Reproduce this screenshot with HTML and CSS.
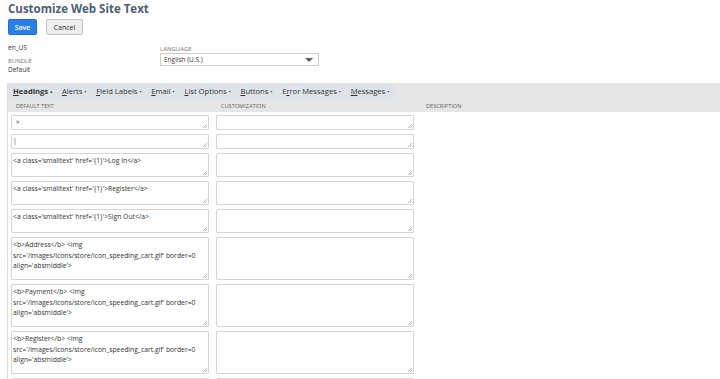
FILE: index.html
```html
<!DOCTYPE html>
<html lang="en">
<head>
  <meta charset="UTF-8" />
  <title>Customize Web Site Text</title>
  <link rel="stylesheet" href="styles.css">
</head>
<body>
<h1 class="page-title">Customize Web Site Text</h1>

<div class="actions">
  <button class="btn btn-save">Save</button>
  <button class="btn btn-cancel">Cancel</button>
</div>

<div class="meta">
  <div class="meta-left">
    <div class="locale">en_US</div>
    <div class="field-label">BUNDLE</div>
    <div class="field-value">Default</div>
  </div>
  <div class="meta-right">
    <div class="field-label">LANGUAGE</div>
    <div class="select">
      <span>English (U.S.)</span>
      <span class="caret"></span>
    </div>
  </div>
</div>

<div class="panel">
  <div class="tab-bar">
    <ul class="tabs">
      <li class="tab active"><u>H</u>eadings <i>•</i></li>
      <li class="tab"><u>A</u>lerts <i>•</i></li>
      <li class="tab"><u>F</u>ield Labels <i>•</i></li>
      <li class="tab"><u>E</u>mail <i>•</i></li>
      <li class="tab"><u>L</u>ist Options <i>•</i></li>
      <li class="tab"><u>B</u>uttons <i>•</i></li>
      <li class="tab">E<u>r</u>ror Messages <i>•</i></li>
      <li class="tab"><u>M</u>essages <i>•</i></li>
    </ul>
  </div>

  <table class="text-table">
    <thead>
      <tr>
        <th class="col-default">DEFAULT TEXT</th>
        <th class="col-custom">CUSTOMIZATION</th>
        <th>DESCRIPTION</th>
      </tr>
    </thead>
    <tbody>
      <tr>
        <td><textarea class="h1 indent">»</textarea></td>
        <td><textarea class="h1"></textarea></td>
        <td></td>
      </tr>
      <tr>
        <td><textarea class="h1">|</textarea></td>
        <td><textarea class="h1"></textarea></td>
        <td></td>
      </tr>
      <tr>
        <td><textarea class="h2">&lt;a class='smalltext' href='{1}'&gt;Log In&lt;/a&gt;</textarea></td>
        <td><textarea class="h2"></textarea></td>
        <td></td>
      </tr>
      <tr>
        <td><textarea class="h2">&lt;a class='smalltext' href='{1}'&gt;Register&lt;/a&gt;</textarea></td>
        <td><textarea class="h2"></textarea></td>
        <td></td>
      </tr>
      <tr>
        <td><textarea class="h2">&lt;a class='smalltext' href='{1}'&gt;Sign Out&lt;/a&gt;</textarea></td>
        <td><textarea class="h2"></textarea></td>
        <td></td>
      </tr>
      <tr>
        <td><textarea class="h3">&lt;b&gt;Address&lt;/b&gt; &lt;img src='/images/icons/store/icon_speeding_cart.gif' border=0 align='absmiddle'&gt;</textarea></td>
        <td><textarea class="h3"></textarea></td>
        <td></td>
      </tr>
      <tr>
        <td><textarea class="h3">&lt;b&gt;Payment&lt;/b&gt; &lt;img src='/images/icons/store/icon_speeding_cart.gif' border=0 align='absmiddle'&gt;</textarea></td>
        <td><textarea class="h3"></textarea></td>
        <td></td>
      </tr>
      <tr>
        <td><textarea class="h3">&lt;b&gt;Register&lt;/b&gt; &lt;img src='/images/icons/store/icon_speeding_cart.gif' border=0 align='absmiddle'&gt;</textarea></td>
        <td><textarea class="h3"></textarea></td>
        <td></td>
      </tr>
      <tr>
        <td><textarea class="h3">&lt;b&gt;Shipping&lt;/b&gt;</textarea></td>
        <td><textarea class="h3"></textarea></td>
        <td></td>
      </tr>
    </tbody>
  </table>
</div>
</body>
</html>
```

FILE: styles.css
```css
* {
  box-sizing: border-box;
}

body {
  margin: 0;
  padding: 0 0 0 8px;
  font-family: "Open Sans", "Liberation Sans", sans-serif;
  color: #333333;
  background: #ffffff;
  overflow: hidden;
}

.page-title {
  margin: 0;
  padding-top: 1px;
  font-size: 11.5px;
  line-height: 16px;
  font-weight: 700;
  color: #4d5e76;
}

.actions {
  display: flex;
  gap: 9px;
  margin-top: 2px;
}

.btn {
  height: 16px;
  padding: 0 5px;
  font-family: inherit;
  font-size: 7px;
  border-radius: 2px;
  cursor: pointer;
}

.btn-save {
  width: 29px;
  background: #2d7fe8;
  border: 1px solid #1f6ed6;
  color: #ffffff;
  font-weight: 600;
}

.btn-cancel {
  width: 37px;
  background: #eeeeee;
  border: 1px solid #c4c4c4;
  color: #333333;
}

.meta {
  display: flex;
  margin-top: 7px;
}

.meta-left {
  width: 152px;
}

.locale {
  font-size: 6.5px;
  line-height: 9px;
  margin-top: 1px;
}

.meta-left .field-label {
  margin-top: 5px;
}

.field-label {
  font-size: 6px;
  line-height: 8px;
  color: #777777;
}

.field-value {
  font-size: 6.5px;
  line-height: 9px;
}

.meta-right {
  padding-top: 3px;
}

.select {
  display: flex;
  align-items: center;
  justify-content: space-between;
  width: 159px;
  height: 13px;
  padding: 0 5px 0 3px;
  border: 1px solid #cccccc;
  font-size: 6.5px;
}

.caret {
  width: 0;
  height: 0;
  border-left: 4px solid transparent;
  border-right: 4px solid transparent;
  border-top: 4px solid #4a607a;
}

.panel {
  margin-top: 9px;
  margin-left: -1px;
  border-left: 1px solid #dddddd;
}

.tab-bar {
  background: #e5e5e5;
  height: 16px;
}

.tabs {
  display: flex;
  margin: 0;
  padding: 0 0 0 5px;
  width: 388px;
  height: 16px;
  align-items: center;
  list-style: none;
  background: #dee3e9;
  gap: 9.6px;
}

.tab {
  font-size: 7.6px;
  color: #333333;
  white-space: nowrap;
}

.tab i {
  font-style: normal;
  font-size: 6px;
}

.tab.active {
  font-weight: 700;
}

.text-table {
  width: 100%;
  border-collapse: collapse;
}

.text-table th {
  background: #e5e5e5;
  height: 13px;
  padding: 0 0 0 8px;
  text-align: left;
  font-size: 5.6px;
  font-weight: 400;
  color: #666666;
}

.text-table th.col-default {
  width: 205px;
}

.text-table th.col-custom {
  width: 205px;
  padding-left: 8px;
}

.text-table td {
  padding: 0 0 4px 3px;
  vertical-align: top;
}

.text-table tbody tr:first-child td {
  padding-top: 3px;
}

textarea {
  display: block;
  width: 198px;
  padding: 2px 2px 2px 1px;
  border: 1px solid #d5d5d5;
  border-radius: 1px;
  font-family: "Open Sans", "Liberation Sans", sans-serif;
  font-size: 6.8px;
  line-height: 10.5px;
  color: #333333;
  resize: none;
  overflow: hidden;
  /* small grip in the corner */
  background:
    linear-gradient(135deg, transparent 55%, #bbbbbb 55%, #bbbbbb 62%, transparent 62%, transparent 78%, #bbbbbb 78%, #bbbbbb 86%, transparent 86%)
    no-repeat right 1px bottom 1px / 5px 5px,
    #ffffff;
}

textarea.indent {
  padding-left: 4px;
}

textarea.h1 {
  height: 15px;
  padding-top: 1px;
}

textarea.h2 {
  height: 24px;
}

textarea.h3 {
  height: 43px;
}
```
